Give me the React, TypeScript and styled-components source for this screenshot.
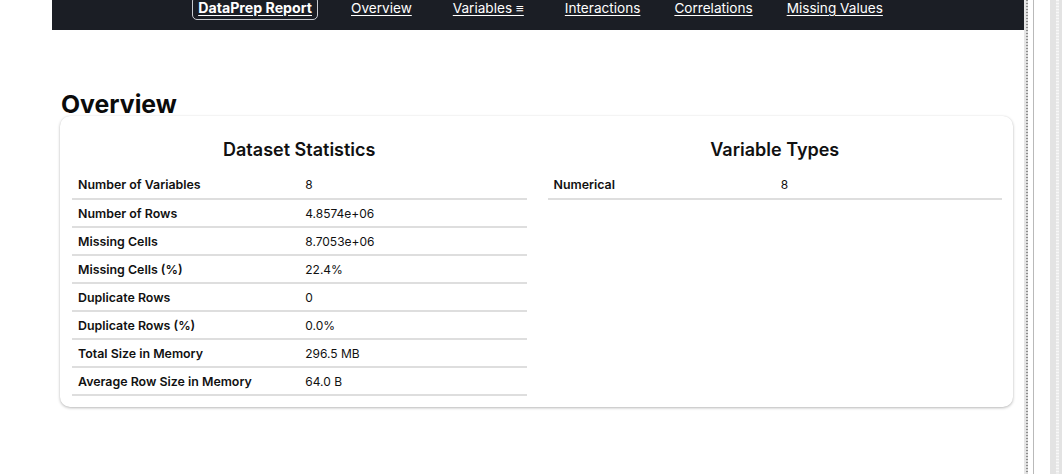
import React from "react";
import styled, { createGlobalStyle } from "styled-components";

const GlobalStyle = createGlobalStyle`
  html, body { margin: 0; padding: 0; background: #fff; }
  body { font-family: Inter, "Noto Sans", Arial, sans-serif; color: #111; }
  * { box-sizing: border-box; }
`;

const Page = styled.div`
  display: flex;
  width: 1062px;
  height: 474px;
  overflow: hidden;
`;

const Main = styled.div`
  width: 1024px;
  display: flex;
  flex-direction: column;
`;

const Header = styled.header`
  margin-left: 52px;
  height: 30px;
  background: #1b1e25;
  display: flex;
  justify-content: center;
  align-items: flex-start;
  overflow: hidden;
`;

const Nav = styled.nav`
  display: flex;
  align-items: flex-start;
  gap: 32px;
  margin-top: -4px;
`;

const NavLink = styled.a<{ $brand?: boolean; $extra?: number }>`
  display: block;
  color: #fff;
  font-size: ${(p) => (p.$brand ? 14.2 : 13.6)}px;
  line-height: 16px;
  font-weight: ${(p) => (p.$brand ? 700 : 400)};
  text-decoration: underline;
  text-underline-offset: 2px;
  padding: 3px ${(p) => (p.$brand ? 5 : 0)}px 3px;
  margin: 0 ${(p) => p.$extra ?? 0}px;
  border: 1px solid ${(p) => (p.$brand ? "#c9ccd1" : "transparent")};
  border-radius: 5px;
  white-space: nowrap;
`;

const Content = styled.main`
  padding: 0 11px 0 60px;
`;

const Heading = styled.h2`
  margin: 62px 0 0 1px;
  font-size: 24.8px;
  line-height: 24px;
  font-weight: 700;
  color: #0b0b0b;
`;

const Card = styled.section`
  display: grid;
  grid-template-columns: 1fr 1fr;
  column-gap: 21px;
  padding: 23px 11px 11px 12px;
  border-radius: 10px;
  background: #fff;
  box-shadow: 0 1px 3px rgba(0, 0, 0, 0.28), 0 0 1px rgba(0, 0, 0, 0.08);
`;

const Panel = styled.div`
  display: flex;
  flex-direction: column;
`;

const PanelTitle = styled.h3`
  margin: 0 0 10px;
  text-align: center;
  font-size: 18px;
  line-height: 22px;
  font-weight: 600;
  color: #111;
`;

const Table = styled.table`
  width: 100%;
  border-collapse: collapse;
  table-layout: fixed;
`;

const Row = styled.tr`
  border-bottom: 2px solid #dedede;
`;

const Cell = styled.td<{ $label?: boolean }>`
  height: 28px;
  padding: 1px 6px 0;
  font-size: ${(p) => (p.$label ? 12.4 : 12)}px;
  line-height: 14px;
  font-weight: ${(p) => (p.$label ? 600 : 400)};
  color: #111;
  vertical-align: middle;
`;

const Gutter = styled.div`
  flex: 1;
  display: flex;
  height: 100%;
`;

const Strip = styled.div<{ $w: number; $bg: string; $dots?: string }>`
  width: ${(p) => p.$w}px;
  height: 100%;
  background: ${(p) => p.$bg};
  ${(p) =>
    p.$dots
      ? `background-image: repeating-linear-gradient(to bottom, ${p.$dots} 0 1px, transparent 1px 3px);`
      : ""}
`;

const datasetStats: [string, string][] = [
  ["Number of Variables", "8"],
  ["Number of Rows", "4.8574e+06"],
  ["Missing Cells", "8.7053e+06"],
  ["Missing Cells (%)", "22.4%"],
  ["Duplicate Rows", "0"],
  ["Duplicate Rows (%)", "0.0%"],
  ["Total Size in Memory", "296.5 MB"],
  ["Average Row Size in Memory", "64.0 B"],
];

const variableTypes: [string, string][] = [["Numerical", "8"]];

function StatPanel({ title, rows }: { title: string; rows: [string, string][] }) {
  return (
    <Panel>
      <PanelTitle>{title}</PanelTitle>
      <Table>
        <tbody>
          {rows.map(([k, v]) => (
            <Row key={k}>
              <Cell $label>{k}</Cell>
              <Cell>{v}</Cell>
            </Row>
          ))}
        </tbody>
      </Table>
    </Panel>
  );
}

export default function App() {
  return (
    <>
      <GlobalStyle />
      <Page>
        <Main>
          <Header>
            <Nav>
              <NavLink $brand href="#">DataPrep Report</NavLink>
              <NavLink href="#">Overview</NavLink>
              <NavLink href="#" $extra={7}>Variables ≡</NavLink>
              <NavLink href="#">Interactions</NavLink>
              <NavLink href="#">Correlations</NavLink>
              <NavLink href="#">Missing Values</NavLink>
            </Nav>
          </Header>
          <Content>
            <Heading>Overview</Heading>
            <Card>
              <StatPanel title="Dataset Statistics" rows={datasetStats} />
              <StatPanel title="Variable Types" rows={variableTypes} />
            </Card>
          </Content>
        </Main>
        <Gutter>
          <Strip $w={2} $bg="#e6e6e6" />
          <Strip $w={2} $bg="#d8d8d8" $dots="#8d8d8d" />
          <Strip $w={5} $bg="#ffffff" />
          <Strip $w={1} $bg="#b9b9b9" />
          <Strip $w={16} $bg="#ffffff" />
          <Strip $w={6} $bg="#e3e3e3" />
          <Strip $w={3} $bg="#ececec" $dots="#f8f8f8" />
          <Strip $w={3} $bg="#e3e3e3" />
        </Gutter>
      </Page>
    </>
  );
}
